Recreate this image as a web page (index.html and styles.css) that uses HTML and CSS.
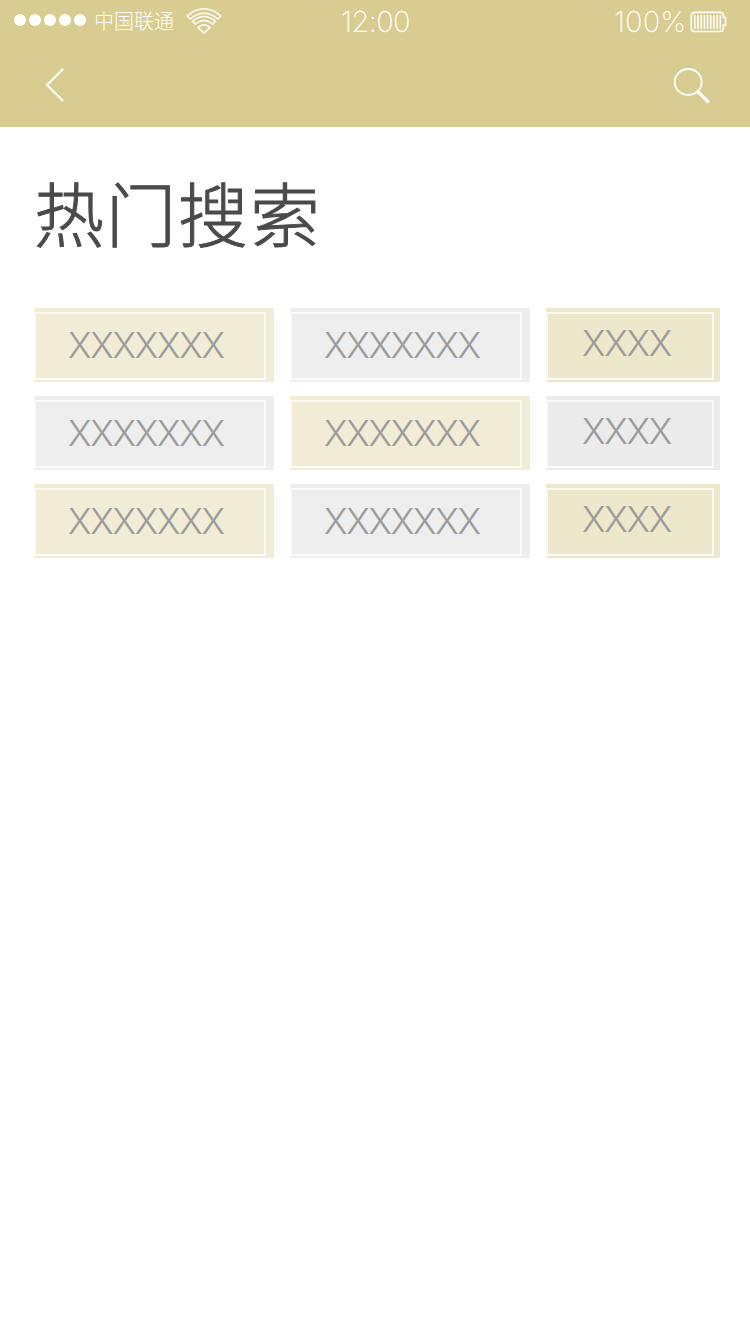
FILE: index.html
```html
<!DOCTYPE html>
<html lang="zh-CN">
<head>
<meta charset="utf-8">
<title>热门搜索</title>
<link rel="stylesheet" href="styles.css">
</head>
<body>
<header class="header">
  <div class="status">
    <div class="status-left">
      <div class="signal"><i></i><i></i><i></i><i></i><i></i></div>
      <span class="carrier">中国联通</span>
      <svg class="wifi" width="38" height="28" viewBox="0 0 38 28" fill="none" stroke="#fff" stroke-width="1.5" stroke-linejoin="round">
        <path d="M2 9Q19-5.500 36 9L32.800 12Q19 .5 5.200 12Z"/>
        <path d="M7.500 14.300Q19 4.800 30.500 14.300L27.800 17Q19 9.800 10.200 17Z"/>
        <path d="M13 20.500Q19 15 25 20.500L19 26Z"/>
      </svg>
    </div>
    <span class="time">12:00</span>
    <div class="status-right">
      <span class="percent">100%</span>
      <svg class="battery" width="38" height="22" viewBox="0 0 38 22" fill="none" stroke="#fff">
        <path stroke-width="1.600" d="M5 1.400H30Q33 1.400 33.500 4.500V6.500H35.600V14H33.500V17Q33 20.500 30 20.500H5Q1.300 20.500 1.300 17V5Q1.300 1.400 5 1.400Z"/>
        <path stroke-width="1.600" d="M4.800 4V18M8 4V18M11.200 4V18M14.400 4V18M17.600 4V18M20.800 4V18M24 4V18M27.200 4V18M30.300 4V18"/>
      </svg>
    </div>
  </div>
  <nav class="nav">
    <svg class="back" width="20" height="36" viewBox="0 0 20 36" fill="none" stroke="#fff" stroke-width="2"><path d="M18 2L2 18L18 34"/></svg>
    <svg class="search" width="38" height="38" viewBox="0 0 38 38" fill="none" stroke="#fff"><ellipse cx="15.200" cy="15" rx="13.500" ry="13" stroke-width="1.800"/><path stroke-width="3.200" d="M24.300 24.200L35.800 35.500"/></svg>
  </nav>
</header>
<main class="content">
  <h1 class="title">热门搜索</h1>
  <div class="tags">
    <div class="tag sand"><span>XXXXXXX</span></div>
    <div class="tag gray"><span>XXXXXXX</span></div>
    <div class="tag sand short"><span>XXXX</span></div>
    <div class="tag gray"><span>XXXXXXX</span></div>
    <div class="tag sand"><span>XXXXXXX</span></div>
    <div class="tag gray short"><span>XXXX</span></div>
    <div class="tag sand"><span>XXXXXXX</span></div>
    <div class="tag gray"><span>XXXXXXX</span></div>
    <div class="tag sand short"><span>XXXX</span></div>
  </div>
</main>
</body>
</html>
```
FILE: styles.css
```css
* { box-sizing: border-box; }
body { margin: 0; background: #fff; font-family: Inter, "Noto Sans CJK SC", sans-serif; }
svg { display: block; flex: none; }
.header { height: 127px; background: #d8cc91; color: #fff; }
.status { height: 44px; display: grid; grid-template-columns: 1fr 68px 1fr; padding: 0 22px 0 14px; }
.status-left { display: flex; align-items: flex-start; }
.signal { display: flex; gap: 3px; margin-top: 14px; }
.signal i { width: 12px; height: 12px; border-radius: 50%; background: #fff; }
.carrier { margin: 6px 0 0 8px; width: 80px; white-space: nowrap; font: 300 20px/30px "Noto Sans CJK SC", sans-serif; }
.wifi { margin: 7px 0 0 11px; }
.time, .percent { font-weight: 250; font-size: 29px; line-height: 44px; white-space: nowrap; }
.time { padding-left: 4px; letter-spacing: -.6px; }
.percent { letter-spacing: 0; }
.status-right { display: flex; justify-content: flex-end; }
.battery { margin: 11px 0 0 4px; }
.nav { display: flex; justify-content: space-between; padding: 23px 39px 0 45px; }
.content { padding: 31px 30px 0 34px; }
.title { margin: 0 0 42px; color: #4a4a4a; font: 300 70px/108px "Noto Sans CJK SC", sans-serif; letter-spacing: 2px; -webkit-text-stroke: 1px #4a4a4a; white-space: nowrap; }
.tags { display: grid; grid-template-columns: 240px 240px 174px; grid-auto-rows: 74px; gap: 14px 16px; }
.tag { padding: 4px 8px 2px 0; color: #9b9b9b; }
.tag span { display: block; height: 68px; padding-left: 32px; border: 2px solid rgba(255, 255, 255, .75); font-weight: 270; font-size: 35.500px; line-height: 63px; letter-spacing: -1.250px; }
.short { padding-right: 6px; }
.short span { padding-left: 34px; line-height: 59px; }
.sand { background: #f1ecd6; }
.gray { background: #eee; }
.sand.short { background: #ede7cb; }
.gray.short { background: #ebebeb; }
```
